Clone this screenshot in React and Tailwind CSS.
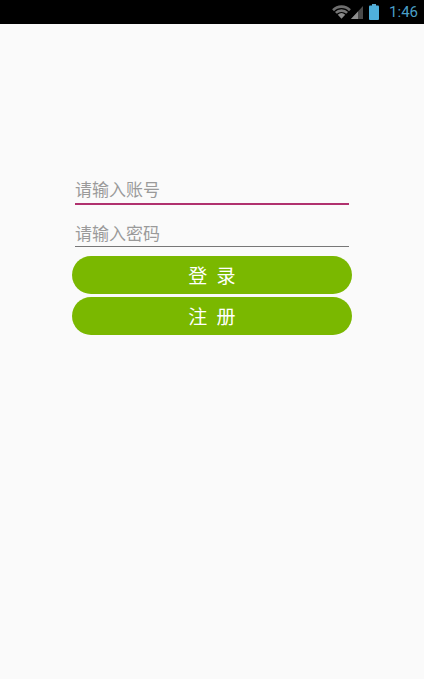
const cjk = { fontFamily: '"Noto Sans CJK SC", "Liberation Sans", sans-serif' };

const StatusBar = () => (
    <div className="flex h-6 items-center justify-end bg-black">
        {/* wifi */}
        <svg width="19" height="15" viewBox="0 0 20 16" className="mb-px">
            <path d="M0 5.5 A14 14 0 0 1 20 5.5 L18 7.6 A11.2 11.2 0 0 0 2 7.6 Z" fill="#6e6e6e" />
            <path d="M3 8.5 A10 10 0 0 1 17 8.5 L15 10.5 A7.2 7.2 0 0 0 5 10.5 Z" fill="#777777" />
            <path d="M6 11.4 A6 6 0 0 1 14 11.4 L10 15.6 Z" fill="#8a8a8a" />
        </svg>
        {/* signal */}
        <svg width="12" height="14" viewBox="0 0 12 14" className="mb-px">
            <path d="M0 14 L12 1 V14 Z" fill="#4a4a4a" />
            <path d="M0 14 L7 6.4 V14 Z" fill="#8e8e8e" />
        </svg>
        {/* battery */}
        <svg width="10" height="16" viewBox="0 0 10 16" className="ml-[6px] mb-px">
            <rect x="3" y="0" width="4" height="2" fill="#5aa9cf" />
            <rect x="0" y="1.5" width="10" height="14.5" rx="1" fill="#4fb0dc" />
        </svg>
        <span className="ml-[10px] mr-[6px] text-[15px] leading-none text-[#4a9fc6]" style={{ fontFamily: 'Roboto, sans-serif' }}>1:46</span>
    </div>
);

const Field = ({ placeholder, className }) => (
    <div className={`w-[274px] text-[17px] leading-[18px] text-[#9a9a9a] ${className}`} style={cjk}>
        {placeholder}
    </div>
);

const PillButton = ({ label }) => (
    <button className="flex h-[38px] w-[280px] items-center justify-center rounded-[19px] bg-[#7ab800] text-[19px] text-white [word-spacing:5px]" style={cjk}>
        {label}
    </button>
);

export default function App() {
    return (
        <div className="flex h-[679px] w-[424px] flex-col overflow-hidden bg-[#fafafa]">
            <StatusBar />
            <div className="flex flex-col items-center pt-[156px]">
                <Field placeholder="请输入账号" className="h-[25px] border-b-2 border-[#b0316e]" />
                <Field placeholder="请输入密码" className="mt-[17px] h-[25px] border-b border-[#777777] pt-[2px]" />
                <div className="mt-[9px] flex flex-col gap-[3px]">
                    <PillButton label="登 录" />
                    <PillButton label="注 册" />
                </div>
            </div>
        </div>
    );
}
